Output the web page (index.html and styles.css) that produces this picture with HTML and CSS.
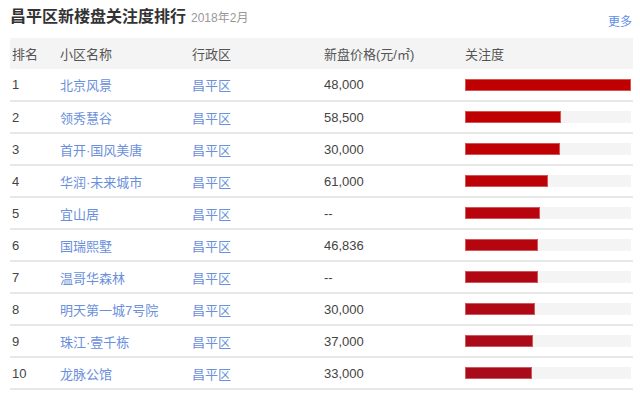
FILE: index.html
```html
<!DOCTYPE html>
<html lang="zh-CN">
<head>
<meta charset="utf-8">
<link rel="stylesheet" href="styles.css">
</head>
<body>
<div class="panel">
  <div class="head">
    <h2 class="title">昌平区新楼盘关注度排行<span class="date">2018年2月</span></h2>
    <a class="more" href="#">更多</a>
  </div>
  <table class="rank">
    <thead>
      <tr><th class="c-no">排名</th><th class="c-name">小区名称</th><th class="c-area">行政区</th><th class="c-price">新盘价格(元/㎡)</th><th class="c-hot">关注度</th></tr>
    </thead>
    <tbody>
      <tr><td>1</td><td><a href="#">北京风景</a></td><td><a href="#">昌平区</a></td><td>48,000</td><td><div class="track"><div class="bar" style="width:166px;background:#c00000"></div></div></td></tr>
      <tr><td>2</td><td><a href="#">领秀慧谷</a></td><td><a href="#">昌平区</a></td><td>58,500</td><td><div class="track"><div class="bar" style="width:96px;background:#c00000"></div></div></td></tr>
      <tr><td>3</td><td><a href="#">首开·国风美唐</a></td><td><a href="#">昌平区</a></td><td>30,000</td><td><div class="track"><div class="bar" style="width:95px;background:#bf0103"></div></div></td></tr>
      <tr><td>4</td><td><a href="#">华润·未来城市</a></td><td><a href="#">昌平区</a></td><td>61,000</td><td><div class="track"><div class="bar" style="width:83px;background:#bc0206"></div></div></td></tr>
      <tr><td>5</td><td><a href="#">宜山居</a></td><td><a href="#">昌平区</a></td><td>--</td><td><div class="track"><div class="bar" style="width:75px;background:#b8040c"></div></div></td></tr>
      <tr><td>6</td><td><a href="#">国瑞熙墅</a></td><td><a href="#">昌平区</a></td><td>46,836</td><td><div class="track"><div class="bar" style="width:73px;background:#b5050f"></div></div></td></tr>
      <tr><td>7</td><td><a href="#">温哥华森林</a></td><td><a href="#">昌平区</a></td><td>--</td><td><div class="track"><div class="bar" style="width:73px;background:#b10712"></div></div></td></tr>
      <tr><td>8</td><td><a href="#">明天第一城7号院</a></td><td><a href="#">昌平区</a></td><td>30,000</td><td><div class="track"><div class="bar" style="width:70px;background:#ae0915"></div></div></td></tr>
      <tr><td>9</td><td><a href="#">珠江·壹千栋</a></td><td><a href="#">昌平区</a></td><td>37,000</td><td><div class="track"><div class="bar" style="width:68px;background:#ab0a18"></div></div></td></tr>
      <tr><td>10</td><td><a href="#">龙脉公馆</a></td><td><a href="#">昌平区</a></td><td>33,000</td><td><div class="track"><div class="bar" style="width:67px;background:#a80c1a"></div></div></td></tr>
    </tbody>
  </table>
</div>
</body>
</html>
```
FILE: styles.css
```css
* { box-sizing: border-box; }
html, body { margin: 0; padding: 0; background: #fff; }
body {
  font-family: "Liberation Sans", "Noto Sans CJK SC", sans-serif;
  color: #333;
  width: 640px;
}
.panel { padding: 0 7px 0 10px; }
.head {
  display: flex;
  align-items: flex-end;
  justify-content: space-between;
  height: 38px;
  padding-bottom: 10px;
}
.title {
  margin: 0;
  font-size: 16px;
  font-weight: bold;
  color: #333;
  line-height: 20px;
}
.date {
  font-size: 12px;
  font-weight: normal;
  color: #999;
  margin-left: 5px;
}
.more {
  font-size: 12px;
  color: #5e8fe8;
  text-decoration: none;
  line-height: 18px;
  margin-bottom: -3px;
  margin-right: 1px;
}
.rank {
  width: 623px;
  border-collapse: collapse;
  table-layout: fixed;
  font-size: 13px;
}
.rank th {
  background: #f4f4f4;
  font-weight: normal;
  color: #555;
  text-align: left;
  height: 31px;
  padding: 0 0 1px 2px;
}
.rank td {
  height: 32px;
  padding: 0 0 0 2px;
  border-bottom: 2px solid #e8e8e8;
  color: #444;
}
.c-no { width: 48px; }
.c-name { width: 132px; }
.c-area { width: 132px; }
.c-price { width: 141px; }
.c-hot { width: 170px; }
.rank a { color: #6a8fdc; text-decoration: none; }
.track {
  width: 166px;
  height: 12px;
  background: #f4f4f4;
}
.bar {
  height: 12px;
  box-shadow: inset 0 0 0 1px rgba(230, 140, 140, 0.6);
}
```
